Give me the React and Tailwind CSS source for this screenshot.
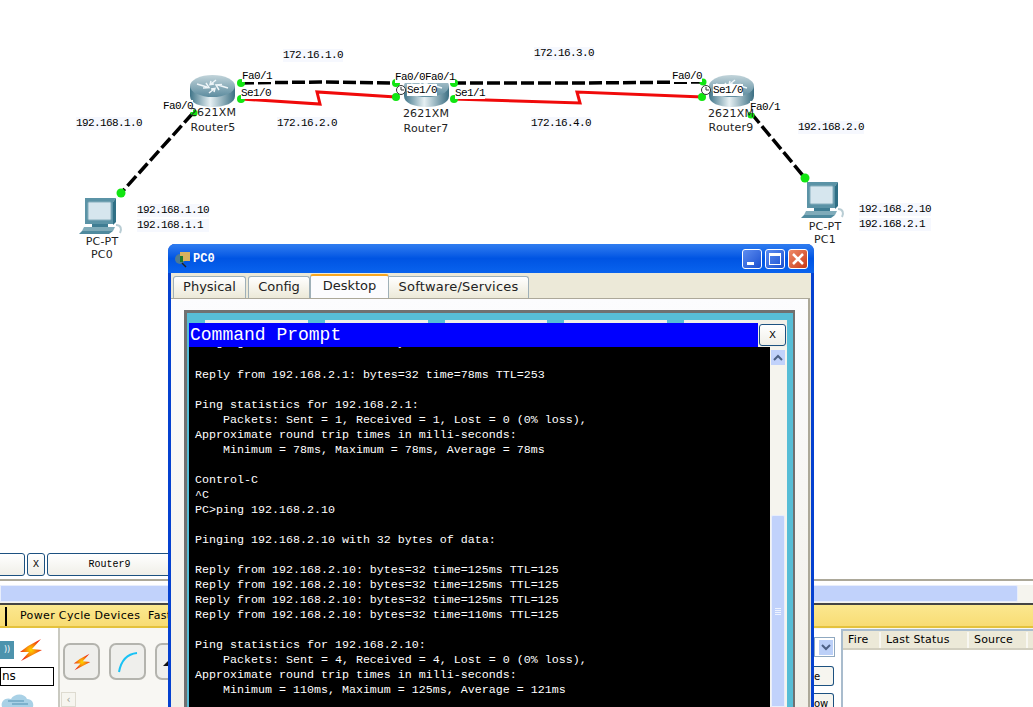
const netLabels = [
  { text: '172.16.1.0', x: 283, y: 49 },
  { text: '172.16.2.0', x: 277, y: 117 },
  { text: '172.16.3.0', x: 534, y: 47 },
  { text: '172.16.4.0', x: 531, y: 117 },
  { text: '192.168.1.0', x: 76, y: 117 },
  { text: '192.168.2.0', x: 798, y: 121 },
  { text: '192.168.1.10', x: 137, y: 204 },
  { text: '192.168.1.1', x: 137, y: 219, w: 72 },
  { text: '192.168.2.10', x: 859, y: 203 },
  { text: '192.168.2.1', x: 859, y: 218, w: 72 },
]

const portLabels = [
  { text: 'Fa0/1', x: 242, y: 70 },
  { text: 'Se1/0', x: 241, y: 87 },
  { text: 'Fa0/0', x: 163, y: 100 },
  { text: 'Fa0/0', x: 395, y: 71 },
  { text: 'Fa0/1', x: 425, y: 71 },
  { text: 'Se1/0', x: 407, y: 84 },
  { text: 'Se1/1', x: 455, y: 87 },
  { text: 'Fa0/0', x: 672, y: 70 },
  { text: 'Se1/0', x: 713, y: 84 },
  { text: 'Fa0/1', x: 750, y: 101 },
]

const deviceLabels = [
  { text: '2621XM', x: 213, y: 106 },
  { text: 'Router5', x: 213, y: 121 },
  { text: '2621XM', x: 426, y: 107 },
  { text: 'Router7', x: 426, y: 122 },
  { text: '2621XM', x: 731, y: 107 },
  { text: 'Router9', x: 731, y: 121 },
  { text: 'PC-PT', x: 102, y: 235 },
  { text: 'PC0', x: 102, y: 248 },
  { text: 'PC-PT', x: 825, y: 220 },
  { text: 'PC1', x: 825, y: 233 },
]

const consoleLines = [
  '',
  'Reply from 192.168.2.1: bytes=32 time=78ms TTL=253',
  '',
  'Ping statistics for 192.168.2.1:',
  '    Packets: Sent = 1, Received = 1, Lost = 0 (0% loss),',
  'Approximate round trip times in milli-seconds:',
  '    Minimum = 78ms, Maximum = 78ms, Average = 78ms',
  '',
  'Control-C',
  '^C',
  'PC>ping 192.168.2.10',
  '',
  'Pinging 192.168.2.10 with 32 bytes of data:',
  '',
  'Reply from 192.168.2.10: bytes=32 time=125ms TTL=125',
  'Reply from 192.168.2.10: bytes=32 time=125ms TTL=125',
  'Reply from 192.168.2.10: bytes=32 time=125ms TTL=125',
  'Reply from 192.168.2.10: bytes=32 time=110ms TTL=125',
  '',
  'Ping statistics for 192.168.2.10:',
  '    Packets: Sent = 4, Received = 4, Lost = 0 (0% loss),',
  'Approximate round trip times in milli-seconds:',
  '    Minimum = 110ms, Maximum = 125ms, Average = 121ms',
]

function RouterIcon({ x, y }) {
  return (
    <g transform={`translate(${x} ${y})`}>
      <path d="M0 11 V21 C0 28 10 32 22.5 32 S45 28 45 21 V11 Z" fill="url(#routerSide)" />
      <ellipse cx="22.5" cy="11" rx="22.5" ry="11" fill="url(#routerTop)" />
      <path d="M7 9 L17 12 M16 8 L19 12.5 L13 13 M38 13 L28 10 M29 15 L26 10 L32 9.500 M26 5 L21 9 M24 9 L20 9.500 L21 6 M19 18 L24 14 M21 14 L25 13.500 L24 17" stroke="#eef5f8" strokeWidth="1.500" fill="none" />
    </g>
  )
}

function PcIcon({ x, y }) {
  return (
    <g transform={`translate(${x} ${y})`}>
      <path d="M6 0 H37 L34 4 V26 H6 Z" fill="#5b93a6" />
      <path d="M37 0 V24 L34 27 V4 Z" fill="#2f6f85" />
      <rect x="9" y="4" width="23" height="18" rx="1" fill="#d6e6ee" stroke="#86aebd" />
      <rect x="13" y="26" width="16" height="3" fill="#3f7d93" />
      <path d="M5 29 H36 L34 33 H3 Z" fill="#7fabb9" />
      <path d="M3 33 H34 L30 36 H0 Z" fill="#4f8a9e" />
      <path d="M37 27 C42 27 43 31 41 35" stroke="#b9cdd4" strokeWidth="2" fill="none" />
    </g>
  )
}

function Clock({ x, y }) {
  return (
    <g transform={`translate(${x} ${y})`}>
      <circle r="4.500" fill="#fff" stroke="#333" />
      <path d="M0 -3 V0 H3" stroke="#333" fill="none" />
    </g>
  )
}

function Bolt({ size, className }) {
  return (
    <svg viewBox="0 0 24 22" width={size} height={size} className={className}>
      <defs>
        <radialGradient id="boltFill">
          <stop offset="0" stopColor="#ffd800" />
          <stop offset="1" stopColor="#ee2b12" />
        </radialGradient>
      </defs>
      <path d="M22 0 L9 7 L1 13 L10 13 L2 22 L23 11 L13 10 Z" fill="url(#boltFill)" />
    </svg>
  )
}

function Diagram() {
  return (
    <div className="relative h-[553px] shrink-0 bg-white">
      <svg width="1033" height="553" className="absolute left-0 top-0">
        <defs>
          <linearGradient id="routerTop" x1="0" y1="0" x2="0" y2="1">
            <stop offset="0" stopColor="#c2d4da" />
            <stop offset="1" stopColor="#5d8c9f" />
          </linearGradient>
          <linearGradient id="routerSide" x1="0" y1="0" x2="1" y2="0">
            <stop offset="0" stopColor="#3f7488" />
            <stop offset="0.45" stopColor="#e6f0f3" />
            <stop offset="1" stopColor="#3c6f83" />
          </linearGradient>
        </defs>
        <RouterIcon x={190} y={75} />
        <RouterIcon x={404} y={75} />
        <RouterIcon x={709} y={75} />
        <PcIcon x={79} y={198} />
        <PcIcon x={801} y={182} />
        <g fill="none" stroke="#000" strokeWidth="3.500" strokeDasharray="13 4">
          <path d="M241 83 L320 82 L396 83" />
          <path d="M453 83 L577 83 L703 82" />
          <path d="M193 113 L121 193" />
          <path d="M751 113 L805 178" />
        </g>
        <g fill="none" stroke="#f00a0a" strokeWidth="3">
          <path d="M241 99 L320 104 L317 92 L396 97" />
          <path d="M453 99 L580 103 L577 92 L703 97" />
        </g>
        <g fill="#12e512">
          <circle cx="241" cy="83" r="4" />
          <circle cx="241" cy="99" r="4" />
          <circle cx="194" cy="113" r="3.500" />
          <circle cx="121" cy="193" r="4.500" />
          <circle cx="396" cy="83" r="4" />
          <circle cx="396" cy="97" r="4" />
          <circle cx="454" cy="83" r="4" />
          <circle cx="454" cy="99" r="4" />
          <circle cx="703" cy="82" r="3.500" />
          <circle cx="702" cy="97" r="4" />
          <circle cx="751" cy="115" r="3.500" />
          <circle cx="805" cy="178" r="4.500" />
        </g>
      </svg>
      {netLabels.map((l) => (
        <span key={l.text} style={{ left: l.x, top: l.y, width: l.w }} className="absolute h-[13px] whitespace-pre bg-[#f6f8fe] font-['Liberation_Mono',monospace] text-[11px] leading-[13px] tracking-[-0.6px] text-black">{l.text}</span>
      ))}
      {portLabels.map((l) => (
        <span key={l.text + l.x} style={{ left: l.x, top: l.y }} className="absolute h-[12px] whitespace-pre bg-white font-['Liberation_Mono',monospace] text-[11px] leading-[12px] tracking-[-0.6px] text-black">{l.text}</span>
      ))}
      {deviceLabels.map((l) => (
        <span key={l.text + l.x} style={{ left: l.x, top: l.y }} className="absolute -translate-x-1/2 whitespace-pre font-['DejaVu_Sans',sans-serif] text-[11px] leading-[14px] tracking-[0.2px] text-[#222]">{l.text}</span>
      ))}
      <svg width="1033" height="110" className="pointer-events-none absolute left-0 top-0">
        <Clock x={401} y={90} />
        <Clock x={706} y={90} />
      </svg>
    </div>
  )
}

function BottomPanel() {
  return (
    <div className="flex flex-1 flex-col overflow-hidden bg-white font-['DejaVu_Sans',sans-serif]">
      {/* tabs of open devices */}
      <div className="flex h-[26px] shrink-0 items-start gap-[2px] bg-white font-['Liberation_Mono',monospace] text-[10px] text-black">
        <div className="ml-[-20px] h-[23px] w-[45px] rounded-[3px] border border-[#1c5180] bg-gradient-to-b from-white to-[#f0efe8]" />
        <div className="flex h-[23px] w-[18px] items-center justify-center rounded-[3px] border border-[#1c5180] bg-gradient-to-b from-white to-[#f0efe8]">X</div>
        <div className="flex h-[23px] w-[125px] items-center justify-center rounded-[3px] border border-[#1c5180] bg-gradient-to-b from-white to-[#f0efe8]">Router9</div>
      </div>
      <div className="h-[6px] shrink-0 border-t-2 border-[#aca899] bg-white" />
      {/* horizontal scroll */}
      <div className="flex h-[18px] shrink-0 items-stretch bg-[#f5f4ee] pb-[1px]">
        <div className="w-[1018px] rounded-r-[2px] border border-[#e8eefc] bg-[#c1d2fb]" />
      </div>
      {/* realtime strip */}
      <div className="flex h-[23px] shrink-0 items-center border-t-2 border-[#444] bg-gradient-to-b from-[#fbe88f] to-[#f8dc74] pt-[2px] text-[11px] tracking-[0.35px] text-black">
        <div className="ml-[5px] h-[20px] w-[2px] bg-black" />
        <span className="ml-[13px] whitespace-pre">Power Cycle Devices  Fast</span>
      </div>
      <div className="h-[2px] shrink-0 bg-[#e4c23c]" />
      <div className="flex flex-1 overflow-hidden">
        <div className="flex w-[60px] shrink-0 flex-col border-r-2 border-[#c9c9c0] bg-white">
          <div className="mt-[11px] flex h-[22px] items-center">
            <div className="h-[18px] w-[14px] bg-[#4d93ad] text-center text-[8px] leading-[18px] text-white">))</div>
            <Bolt size={24} className="ml-[5px]" />
          </div>
          <div className="mt-[6px] h-[19px] w-[54px] border border-black pl-[1px] text-[12px] leading-[17px]">ns</div>
          <svg width="34" height="14" className="mt-[7px]">
            <path d="M2 14 C0 7 7 4 11 6 C14 0 25 0 27 6 C32 6 34 10 33 14 Z" fill="#a9d1e6" />
            <path d="M8 8 H24 M12 11 H28" stroke="#6fa6c4" strokeWidth="1.500" />
          </svg>
        </div>
        <div className="flex flex-1 flex-col bg-[#f8f7f3]">
          <div className="flex gap-[9px] pl-[3px] pt-[15px]">
            <div className="flex h-[37px] w-[37px] items-center justify-center rounded-[7px] border-2 border-[#b4b4ae] bg-[#efefec]">
              <Bolt size={18} />
            </div>
            <div className="flex h-[37px] w-[37px] items-center justify-center rounded-[7px] border-2 border-[#b4b4ae] bg-[#efefec]">
              <svg width="24" height="24" viewBox="0 0 24 24"><path d="M3 22 C5 11 11 4 21 3" stroke="#19c2f5" strokeWidth="2" fill="none" /></svg>
            </div>
            <div className="flex h-[37px] w-[37px] items-end rounded-[7px] border-2 border-[#b4b4ae] bg-[#efefec] pb-[12px] pl-[6px]">
              <svg width="8" height="8" viewBox="0 0 8 8"><path d="M0 8 L8 0 V8 Z" fill="#111" /></svg>
            </div>
          </div>
          <div className="mt-[12px] flex h-[15px] items-center pl-[1px]">
            <div className="flex h-[15px] w-[15px] items-center justify-center border border-[#dedbd0] bg-[#f6f5ef] text-[10px] text-[#9a9a94]">‹</div>
          </div>
        </div>
      </div>
    </div>
  )
}

function PduPanel() {
  return (
    <div className="absolute left-[814px] top-[629px] flex h-[78px] w-[219px] bg-white font-['DejaVu_Sans',sans-serif] text-[11px] text-black">
      <div className="w-[27px] shrink-0 pt-[8px]">
        <div className="flex h-[20px] w-[21px] items-center justify-end border border-[#8fa8c0] bg-white pr-[1px]">
          <div className="flex h-[15px] w-[14px] items-center justify-center bg-[#bcd0f8]">
            <svg width="10" height="8" viewBox="0 0 10 8"><path d="M1 2 L5 6 L9 2" stroke="#4d6185" strokeWidth="2" fill="none" /></svg>
          </div>
        </div>
        <div className="mt-[9px] flex h-[20px] w-[20px] items-center overflow-hidden rounded-r-[3px] border border-l-0 border-[#1c5180] bg-[#f6f5ef] text-[10px]">e</div>
        <div className="mt-[7px] flex h-[20px] w-[20px] items-center overflow-hidden rounded-r-[3px] border border-l-0 border-[#1c5180] bg-[#f6f5ef] text-[10px]">ow</div>
      </div>
      <div className="flex-1 border-l-2 border-t-2 border-[#a9bccd]">
        <div className="flex h-[19px] items-center border-b-2 border-[#d2cfc0] bg-[#ece9d8] pt-[1px] tracking-[0.2px]">
          <span className="w-[38px] border-r-2 border-[#f8f7f1] pl-[5px]">Fire</span>
          <span className="w-[88px] border-r-2 border-[#f8f7f1] pl-[5px]">Last Status</span>
          <span className="w-[59px] border-r-2 border-[#f8f7f1] pl-[5px]">Source</span>
        </div>
      </div>
    </div>
  )
}

function PcWindow() {
  return (
    <div className="absolute left-[168px] top-[244px] flex h-[463px] w-[646px] flex-col rounded-t-[7px] border-x-[3px] border-[#0541d0] bg-[#0541d0]">
      {/* title bar */}
      <div className="-mx-[3px] flex h-[29px] shrink-0 items-center rounded-t-[7px] bg-gradient-to-b from-[#2f7df0] via-[#0054e3] to-[#0a63ee] pl-[6px] pr-[6px]">
        <svg width="18" height="18" viewBox="0 0 18 18">
          <circle cx="6" cy="9" r="5" fill="#4f7a92" />
          <rect x="6" y="2" width="10" height="9" fill="#d8b15e" />
          <rect x="6" y="6" width="3" height="6" fill="#1d7a2f" />
          <path d="M8 13 L12 17" stroke="#222" strokeWidth="1.500" />
        </svg>
        <span className="ml-[1px] font-['Liberation_Mono',monospace] text-[12px] font-bold text-white">PC0</span>
        <div className="ml-auto flex gap-[3px]">
          <div className="relative h-[20px] w-[20px] rounded-[3px] border border-white bg-gradient-to-br from-[#5d8cf0] to-[#1a4fd0]">
            <div className="absolute bottom-[3px] left-[4px] h-[3px] w-[7px] bg-white" />
          </div>
          <div className="flex h-[20px] w-[20px] items-center justify-center rounded-[3px] border border-white bg-gradient-to-br from-[#5d8cf0] to-[#1a4fd0]">
            <div className="h-[12px] w-[12px] border border-t-[3px] border-white" />
          </div>
          <div className="flex h-[20px] w-[20px] items-center justify-center rounded-[3px] border border-white bg-gradient-to-br from-[#ee8a68] to-[#c8360f]">
            <svg width="12" height="12" viewBox="0 0 12 12"><path d="M1 1 L11 11 M11 1 L1 11" stroke="#fff" strokeWidth="2.500" /></svg>
          </div>
        </div>
      </div>
      {/* tabs */}
      <div className="flex h-[25px] shrink-0 items-end bg-[#ece9d8] pl-[2px] font-['DejaVu_Sans',sans-serif] text-[13px] text-[#222]">
        <div className="flex h-[22px] w-[73px] items-center justify-center rounded-t-[3px] border border-b-0 border-[#9fb0b8] bg-gradient-to-b from-white to-[#ece9d8] pb-[2px]">Physical</div>
        <div className="ml-[2px] flex h-[22px] w-[62px] items-center justify-center rounded-t-[3px] border border-b-0 border-[#9fb0b8] bg-gradient-to-b from-white to-[#ece9d8] pb-[2px]">Config</div>
        <div className="flex h-[24px] w-[79px] items-center justify-center rounded-t-[3px] border-x border-t-2 border-x-[#9fb0b8] border-t-[#f5a623] bg-[#fcfcfe] pb-[2px]">Desktop</div>
        <div className="flex h-[22px] w-[140px] items-center justify-center rounded-tr-[3px] border border-b-0 border-l-0 border-[#9fb0b8] bg-gradient-to-b from-white to-[#ece9d8] pb-[2px] tracking-[0.2px]">Software/Services</div>
      </div>
      {/* tab page */}
      <div className="flex flex-1 flex-col overflow-hidden bg-[#ece9d8] pr-[1px]">
        <div className="flex flex-1 flex-col overflow-hidden border-r-2 border-t border-[#aca899] bg-gradient-to-b from-[#fcfcfe] to-[#f1efe8] pl-[13px] pr-[13px] pt-[11px]">
          <div className="flex flex-1 flex-col overflow-hidden border-l-[3px] border-r-2 border-t-[3px] border-[#707070] bg-[#57bdd6] pl-[2px] pr-[6px] pt-[7px]">
            {/* buttons of the desktop, mostly hidden behind the prompt */}
            <div className="flex h-[3px] shrink-0 gap-[17px] pl-[16px]">
              <div className="w-[103px] bg-[#f1efe8]" />
              <div className="w-[103px] bg-[#f1efe8]" />
              <div className="w-[103px] bg-[#f1efe8]" />
              <div className="w-[103px] bg-[#f1efe8]" />
              <div className="w-[103px] bg-[#f1efe8]" />
            </div>
            <div className="flex h-[24px] shrink-0 bg-[#0000ff]">
              <span className="flex-1 pl-[1px] font-['Liberation_Mono',monospace] text-[18px] leading-[24px] text-white">Command Prompt</span>
              <div className="flex w-[29px] items-center justify-center bg-[#f1efe8] p-[1px]">
                <div className="flex h-full w-full items-center justify-center rounded-[3px] border border-[#1c5180] bg-gradient-to-b from-white to-[#f0efe8] font-['Liberation_Mono',monospace] text-[11px] text-black">X</div>
              </div>
            </div>
            <div className="flex flex-1 overflow-hidden bg-black">
              <div className="flex-1 overflow-hidden pl-[6px]">
                {/* the line above is scrolled away, only its descenders still show */}
                <div className="flex h-[3px] overflow-hidden font-['Liberation_Mono',monospace] text-[11.67px] leading-[3px] text-white">
                  <span className="whitespace-pre leading-[3px] [transform:translateY(-5px)]">Pinging 192.168.2.1 with 32 bytes of data:</span>
                </div>
                <pre className="mt-[3px] font-['Liberation_Mono',monospace] text-[11.67px] leading-[15px] text-white">
                  {consoleLines.map((line, i) => (
                    <div key={i} className="h-[15px]">{line}</div>
                  ))}
                </pre>
              </div>
              {/* scrollbar */}
              <div className="flex w-[17px] shrink-0 flex-col bg-[#f5f4ee] pl-[1px] pr-[2px] pt-[3px]">
                <div className="flex h-[15px] shrink-0 items-center justify-center bg-[#c1d2fb]">
                  <svg width="10" height="8" viewBox="0 0 10 8"><path d="M1 6 L5 2 L9 6" stroke="#4d6185" strokeWidth="2" fill="none" /></svg>
                </div>
                <div className="mt-[150px] flex flex-1 flex-col items-center rounded-t-[2px] border border-[#e8eefc] bg-[#c1d2fb] pt-[92px]">
                  <div className="h-[1px] w-[6px] bg-[#eef3ff]" />
                  <div className="mt-[1px] h-[1px] w-[6px] bg-[#eef3ff]" />
                  <div className="mt-[1px] h-[1px] w-[6px] bg-[#eef3ff]" />
                  <div className="mt-[1px] h-[1px] w-[6px] bg-[#eef3ff]" />
                </div>
              </div>
            </div>
          </div>
        </div>
      </div>
    </div>
  )
}

export default function App() {
  return (
    <div className="relative flex h-[707px] w-[1033px] flex-col overflow-hidden bg-white">
      <Diagram />
      <BottomPanel />
      <PduPanel />
      <PcWindow />
    </div>
  )
}
